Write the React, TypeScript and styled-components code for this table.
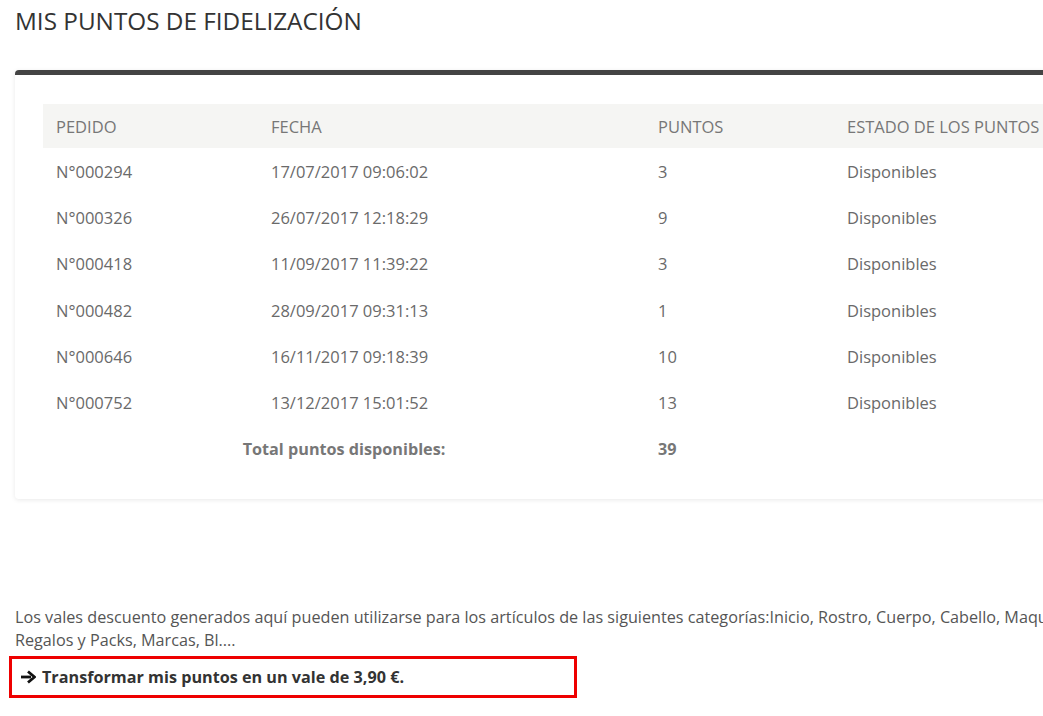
import React from "react";
import styled, { createGlobalStyle } from "styled-components";

const GlobalStyle = createGlobalStyle`
  html, body {
    margin: 0;
    padding: 0;
    background: #fff;
    overflow: hidden;
  }
  body {
    font-family: "Open Sans", "Liberation Sans", Arial, sans-serif;
  }
`;

const Page = styled.div`
  width: 1300px;
  padding: 5px 0 0 15px;
`;

const Title = styled.h1`
  margin: 0 0 33px 0;
  font-size: 24.3px;
  line-height: 32px;
  font-weight: 400;
  color: #333;
`;

const Card = styled.div`
  border-top: 5px solid #444;
  border-radius: 4px;
  box-shadow: 0 1px 5px rgba(0, 0, 0, 0.09);
  padding: 29px 28px 27px 28px;
  background: #fff;
`;

const Table = styled.table`
  width: 100%;
  border-collapse: collapse;
  font-size: 16.5px;
  color: #6a6a6a;
`;

const HeadCell = styled.th<{ $w?: number }>`
  background: #f5f5f3;
  height: 44px;
  padding: 0 13px;
  text-align: left;
  font-weight: 400;
  color: #777;
  width: ${(p) => (p.$w ? `${p.$w}px` : "auto")};
  box-sizing: border-box;
  white-space: nowrap;
`;

const Cell = styled.td<{ $center?: boolean; $bold?: boolean }>`
  height: 46.3px;
  padding: 0 13px;
  text-align: ${(p) => (p.$center ? "center" : "left")};
  font-weight: ${(p) => (p.$bold ? 700 : 400)};
  font-size: ${(p) => (p.$bold ? "16.2px" : "inherit")};
  color: ${(p) => (p.$bold ? "#777" : "#6a6a6a")};
`;

const Info = styled.p`
  margin: 107px 0 4px 0;
  width: 1160px;
  font-size: 16.2px;
  line-height: 23px;
  color: #555;
`;

const ActionBox = styled.div`
  margin-left: -6px;
  width: 568px;
  height: 42px;
  box-sizing: border-box;
  border: 3px solid #ee0000;
  display: flex;
  align-items: center;
  gap: 6px;
  padding-left: 8px;
`;

const ActionLink = styled.a`
  font-size: 16.2px;
  font-weight: 700;
  color: #333;
  text-decoration: none;
`;

const Arrow = () => (
  <svg width="16" height="14" viewBox="0 0 16 14">
    <path d="M1 7h10" stroke="#111" strokeWidth="2.8" />
    <path d="M8 1.5 14.5 7 8 12.5" fill="none" stroke="#111" strokeWidth="2.8" />
  </svg>
);

const rows = [
  ["N°000294", "17/07/2017 09:06:02", "3"],
  ["N°000326", "26/07/2017 12:18:29", "9"],
  ["N°000418", "11/09/2017 11:39:22", "3"],
  ["N°000482", "28/09/2017 09:31:13", "1"],
  ["N°000646", "16/11/2017 09:18:39", "10"],
  ["N°000752", "13/12/2017 15:01:52", "13"],
];

const App: React.FC = () => {
  return (
    <Page>
      <GlobalStyle />
      <Title>MIS PUNTOS DE FIDELIZACIÓN</Title>
      <Card>
        <Table>
          <thead>
            <tr>
              <HeadCell $w={215}>PEDIDO</HeadCell>
              <HeadCell $w={387}>FECHA</HeadCell>
              <HeadCell $w={189}>PUNTOS</HeadCell>
              <HeadCell>ESTADO DE LOS PUNTOS</HeadCell>
            </tr>
          </thead>
          <tbody>
            {rows.map(([pedido, fecha, puntos]) => (
              <tr key={pedido}>
                <Cell>{pedido}</Cell>
                <Cell>{fecha}</Cell>
                <Cell>{puntos}</Cell>
                <Cell>Disponibles</Cell>
              </tr>
            ))}
            <tr>
              <Cell colSpan={2} $center $bold>
                Total puntos disponibles:
              </Cell>
              <Cell $bold>39</Cell>
              <Cell />
            </tr>
          </tbody>
        </Table>
      </Card>
      <Info>
        Los vales descuento generados aquí pueden utilizarse para los artículos
        de las siguientes categorías:Inicio, Rostro, Cuerpo, Cabello,
        Maquillaje, Perfumes, Regalos y Packs, Marcas, Bl....
      </Info>
      <ActionBox>
        <Arrow />
        <ActionLink href="#">Transformar mis puntos en un vale de 3,90 €.</ActionLink>
      </ActionBox>
    </Page>
  );
};

export default App;
